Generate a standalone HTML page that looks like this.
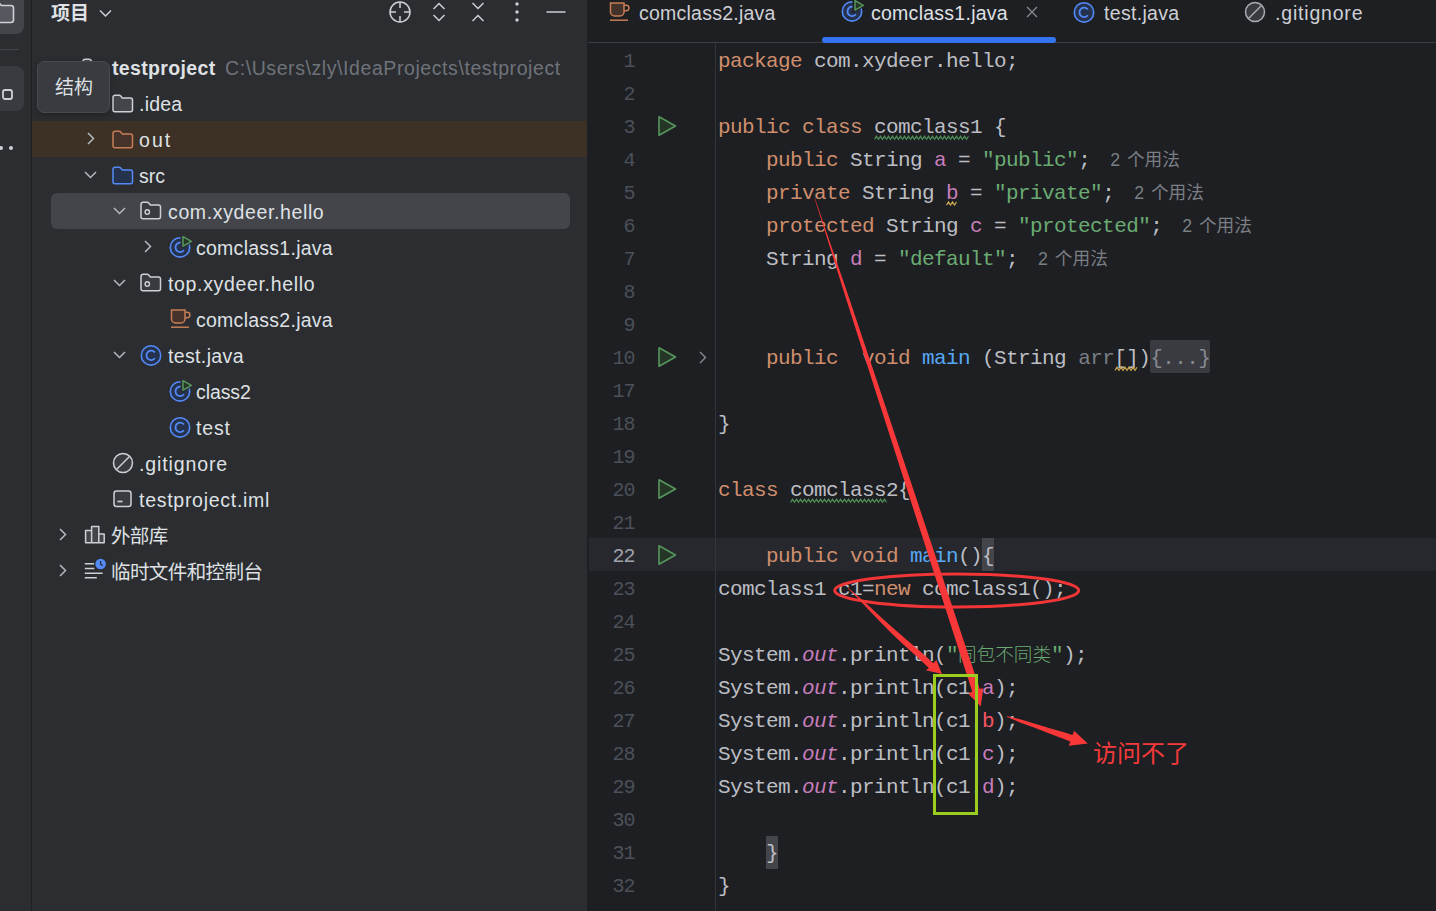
<!DOCTYPE html><html lang="zh"><head><meta charset="utf-8"><title>IDE</title><style>
*{box-sizing:border-box;margin:0;padding:0}
html,body{width:1436px;height:911px;overflow:hidden;background:#1e1f22}
body{position:relative;font-family:"Liberation Sans","Noto Sans CJK SC",sans-serif;color:#dfe1e5}
.abs{position:absolute}
#strip{left:0;top:0;width:31px;height:911px;background:#2b2d30}
#stripb{left:31px;top:0;width:1px;height:911px;background:#1e1f22}
#panel{left:32px;top:0;width:555px;height:911px;background:#2b2d30}
.row{position:absolute;left:0;height:36px;line-height:36px;font-size:19.500px;white-space:nowrap;color:#dfe1e5}
.t{position:absolute;top:0;white-space:nowrap}
.code{position:absolute;left:718px;height:33px;line-height:33px;font-family:"Liberation Mono","Noto Sans CJK SC",monospace;font-size:21px;letter-spacing:-0.600px;white-space:pre;color:#bcbec4}
.ln{position:absolute;left:586.500px;width:48px;text-align:right;height:33px;line-height:33px;font-family:"Liberation Mono","Noto Sans CJK SC",monospace;font-size:20px;letter-spacing:-1px;color:#4b5059}
.k{color:#cf8e6d}.s{color:#6aab73}.f{color:#c77dbb}.m{color:#56a8f5}.g{color:#7a7e85}.i{font-style:italic;color:#c77dbb}
.hint{font-family:"Liberation Sans","Noto Sans CJK SC",sans-serif;font-size:17.700px;color:#7a7e85;margin-left:20px;letter-spacing:0;word-spacing:2px;position:relative;top:0.700px}
.tab{position:absolute;top:0;height:26px;line-height:26px;font-size:19.500px;white-space:nowrap;color:#ced0d6}
svg{position:absolute;overflow:visible}
</style></head><body>
<div id="strip" class="abs"></div><div id="stripb" class="abs"></div><div id="panel" class="abs"></div>
<div class="abs" style="left:-8px;top:-12px;width:31.500px;height:46px;border-radius:8px;background:#43454a"></div>
<svg style="left:0;top:0" width="32" height="40"><path d="M-4 2.500h2.500l3 3h9.500a2.500 2.500 0 0 1 2.500 2.500v12a2.500 2.500 0 0 1-2.500 2.500h-15z" fill="#55585e" stroke="#ced0d6" stroke-width="1.600"/></svg>
<div class="abs" style="left:0;top:49px;width:19px;height:1px;background:#43454a"></div>
<div class="abs" style="left:-8px;top:65.500px;width:31.500px;height:45px;border-radius:8px;background:#393b40"></div>
<svg style="left:0;top:80px" width="20" height="30"><rect x="3" y="10" width="9" height="9" rx="2" fill="none" stroke="#ced0d6" stroke-width="1.8"/></svg>
<svg style="left:0;top:140px" width="20" height="16"><circle cx="1" cy="8" r="2" fill="#ced0d6"/><circle cx="11" cy="8" r="2" fill="#ced0d6"/></svg>
<div class="abs" style="left:51px;top:-1.500px;height:30px;line-height:30px;font-size:19px;font-weight:bold;color:#dfe1e5;white-space:nowrap">项目</div>
<svg style="left:98px;top:8px" width="16" height="12"><path d="M2 2.5l5.5 5.5l5.5-5.5" fill="none" stroke="#ced0d6" stroke-width="1.5"/></svg>
<svg style="left:386px;top:0" width="200" height="28" fill="none" stroke="#ced0d6" stroke-width="1.5"><circle cx="14" cy="12" r="10"/><path d="M14 2v6M14 16v6M4 12h6M18 12h6"/><path d="M47.5 9l5.5-5.5l5.5 5.5M47.5 15l5.5 5.5l5.5-5.5"/><path d="M86.5 3l5.5 5.5l5.5-5.5M86.5 21l5.5-5.5l5.5 5.5"/><g fill="#ced0d6" stroke="none"><circle cx="131" cy="4" r="1.7"/><circle cx="131" cy="12" r="1.7"/><circle cx="131" cy="20" r="1.7"/></g><path d="M160.5 12h19"/></svg>
<div class="abs" style="left:32px;top:121px;width:555px;height:36px;background:#3d3126"></div>
<div class="abs" style="left:51px;top:193px;width:518.500px;height:36px;border-radius:6px;background:#43454a"></div>
<svg style="left:82px;top:57.5px" width="22" height="19"><path d="M1 3.3a2 2 0 0 1 2-2h4.2a2 2 0 0 1 1.5.7l1.6 1.9h8.2a2 2 0 0 1 2 2v9.8a2 2 0 0 1-2 2h-15.5a2 2 0 0 1-2-2z" fill="#43454a" stroke="#ced0d6" stroke-width="1.5"/></svg>
<div id="f1" class="row" style="left:112px;top:49.5px;letter-spacing:0.350px;"><b>testproject</b></div>
<div id="f2" class="row" style="left:225px;top:49.5px;letter-spacing:0.581px;color:#6f737a">C:\Users\zly\IdeaProjects\testproject</div>
<svg style="left:112px;top:93.5px" width="22" height="19"><path d="M1 3.3a2 2 0 0 1 2-2h4.2a2 2 0 0 1 1.5.7l1.6 1.9h8.2a2 2 0 0 1 2 2v9.8a2 2 0 0 1-2 2h-15.5a2 2 0 0 1-2-2z" fill="#43454a" stroke="#ced0d6" stroke-width="1.5"/></svg>
<div id="f3" class="row" style="left:139px;top:85.5px;letter-spacing:0.226px;">.idea</div>
<svg style="left:86px;top:131.0px" width="12" height="16"><path d="M2 2l5.5 5.5l-5.5 5.5" fill="none" stroke="#b4b8bf" stroke-width="1.5"/></svg>
<svg style="left:112px;top:129.5px" width="22" height="19"><path d="M1 3.3a2 2 0 0 1 2-2h4.2a2 2 0 0 1 1.5.7l1.6 1.9h8.2a2 2 0 0 1 2 2v9.8a2 2 0 0 1-2 2h-15.5a2 2 0 0 1-2-2z" fill="#45322b" stroke="#c77d55" stroke-width="1.5"/></svg>
<div id="f4" class="row" style="left:139px;top:121.5px;letter-spacing:2.045px;">out</div>
<svg style="left:83px;top:169.5px" width="16" height="12"><path d="M2 2l5.5 5.5l5.5-5.5" fill="none" stroke="#b4b8bf" stroke-width="1.5"/></svg>
<svg style="left:112px;top:165.5px" width="22" height="19"><path d="M1 3.3a2 2 0 0 1 2-2h4.2a2 2 0 0 1 1.5.7l1.6 1.9h8.2a2 2 0 0 1 2 2v9.8a2 2 0 0 1-2 2h-15.5a2 2 0 0 1-2-2z" fill="#25324d" stroke="#548af7" stroke-width="1.5"/></svg>
<div id="f5" class="row" style="left:139px;top:157.5px;letter-spacing:-0.050px;">src</div>
<svg style="left:112px;top:205.5px" width="16" height="12"><path d="M2 2l5.5 5.5l5.5-5.5" fill="none" stroke="#b4b8bf" stroke-width="1.5"/></svg>
<svg style="left:140px;top:201.0px" width="22" height="19"><path d="M1 3.3a2 2 0 0 1 2-2h4.2a2 2 0 0 1 1.5.7l1.6 1.9h8.2a2 2 0 0 1 2 2v9.8a2 2 0 0 1-2 2h-15.5a2 2 0 0 1-2-2z" fill="#393b40" stroke="#ced0d6" stroke-width="1.5"/><circle cx="7.3" cy="11" r="2.2" fill="none" stroke="#ced0d6" stroke-width="1.4"/></svg>
<div id="f6" class="row" style="left:168px;top:193.5px;letter-spacing:0.625px;">com.xydeer.hello</div>
<svg style="left:143px;top:239.0px" width="12" height="16"><path d="M2 2l5.5 5.5l-5.5 5.5" fill="none" stroke="#b4b8bf" stroke-width="1.5"/></svg>
<svg style="left:168px;top:233.5px" width="24" height="26"><circle cx="12" cy="13.400" r="9.700" fill="#25324d" stroke="#548af7" stroke-width="1.600"/><path d="M15.900 10.500a4.700 4.700 0 1 0 0 5.800" fill="none" stroke="#548af7" stroke-width="1.800"/><path d="M12.600 -0.800v16l14-8z" fill="#2b2d30"/><path d="M15 2.600v9.600l8.300-4.800z" fill="#253627" stroke="#57965c" stroke-width="1.500" stroke-linejoin="round"/></svg>
<div id="f7" class="row" style="left:196px;top:229.5px;letter-spacing:0.261px;">comclass1.java</div>
<svg style="left:112px;top:277.5px" width="16" height="12"><path d="M2 2l5.5 5.5l5.5-5.5" fill="none" stroke="#b4b8bf" stroke-width="1.5"/></svg>
<svg style="left:140px;top:273.0px" width="22" height="19"><path d="M1 3.3a2 2 0 0 1 2-2h4.2a2 2 0 0 1 1.5.7l1.6 1.9h8.2a2 2 0 0 1 2 2v9.8a2 2 0 0 1-2 2h-15.5a2 2 0 0 1-2-2z" fill="#393b40" stroke="#ced0d6" stroke-width="1.5"/><circle cx="7.3" cy="11" r="2.2" fill="none" stroke="#ced0d6" stroke-width="1.4"/></svg>
<div id="f8" class="row" style="left:168px;top:265.5px;letter-spacing:0.659px;">top.xydeer.hello</div>
<svg style="left:170px;top:309.0px" width="22" height="20"><path d="M1.5 1h13.5v9a4 4 0 0 1-4 4h-5.500a4 4 0 0 1-4-4z" fill="#45322b" stroke="#c77d55" stroke-width="1.5"/><path d="M15 3.300h2.200a2.300 2.300 0 0 1 0 5.400h-2.200" fill="none" stroke="#c77d55" stroke-width="1.5"/><path d="M1 18.2h18" stroke="#c77d55" stroke-width="1.5"/></svg>
<div id="f9" class="row" style="left:196px;top:301.5px;letter-spacing:0.261px;">comclass2.java</div>
<svg style="left:112px;top:349.5px" width="16" height="12"><path d="M2 2l5.5 5.5l5.5-5.5" fill="none" stroke="#b4b8bf" stroke-width="1.5"/></svg>
<svg style="left:139px;top:341.5px" width="24" height="26"><circle cx="12" cy="13.400" r="9.700" fill="#25324d" stroke="#548af7" stroke-width="1.600"/><path d="M15.900 10.500a4.700 4.700 0 1 0 0 5.800" fill="none" stroke="#548af7" stroke-width="1.800"/></svg>
<div id="f10" class="row" style="left:168px;top:337.5px;letter-spacing:0.359px;">test.java</div>
<svg style="left:168px;top:377.5px" width="24" height="26"><circle cx="12" cy="13.400" r="9.700" fill="#25324d" stroke="#548af7" stroke-width="1.600"/><path d="M15.900 10.500a4.700 4.700 0 1 0 0 5.800" fill="none" stroke="#548af7" stroke-width="1.800"/><path d="M12.600 -0.800v16l14-8z" fill="#2b2d30"/><path d="M15 2.600v9.600l8.300-4.800z" fill="#253627" stroke="#57965c" stroke-width="1.500" stroke-linejoin="round"/></svg>
<div id="f11" class="row" style="left:196px;top:373.5px;letter-spacing:-0.076px;">class2</div>
<svg style="left:168px;top:413.5px" width="24" height="26"><circle cx="12" cy="13.400" r="9.700" fill="#25324d" stroke="#548af7" stroke-width="1.600"/><path d="M15.900 10.500a4.700 4.700 0 1 0 0 5.800" fill="none" stroke="#548af7" stroke-width="1.800"/></svg>
<div id="f12" class="row" style="left:196px;top:409.5px;letter-spacing:0.854px;">test</div>
<svg style="left:112px;top:451.5px" width="22" height="22"><circle cx="11" cy="11" r="9.500" fill="#393b40" stroke="#ced0d6" stroke-width="1.5"/><path d="M4.500 17.500l13-13" stroke="#ced0d6" stroke-width="1.5"/></svg>
<div id="f13" class="row" style="left:139px;top:445.5px;letter-spacing:0.887px;">.gitignore</div>
<svg style="left:113px;top:489.5px" width="20" height="18"><rect x="1" y="1" width="17" height="15.500" rx="2.500" fill="#393b40" stroke="#ced0d6" stroke-width="1.500"/><path d="M4.500 11.500h5" stroke="#ced0d6" stroke-width="1.700"/></svg>
<div id="f14" class="row" style="left:139px;top:481.5px;letter-spacing:0.722px;">testproject.iml</div>
<svg style="left:58px;top:527.0px" width="12" height="16"><path d="M2 2l5.5 5.5l-5.5 5.5" fill="none" stroke="#b4b8bf" stroke-width="1.5"/></svg>
<svg style="left:84px;top:525.0px" width="22" height="20" fill="#43454a" stroke="#ced0d6" stroke-width="1.500" stroke-linejoin="round"><path d="M1.600 5.400h6v12.400h-6zM7.600 1.600h7.200v16.200h-7.200zM14.800 9.100h5.400v8.700h-5.400z"/></svg>
<div id="f15" class="row" style="left:111px;top:517.5px;letter-spacing:-0.658px;">外部库</div>
<svg style="left:58px;top:563.0px" width="12" height="16"><path d="M2 2l5.5 5.5l-5.5 5.5" fill="none" stroke="#b4b8bf" stroke-width="1.5"/></svg>
<svg style="left:84px;top:559.0px" width="24" height="24"><path d="M0.800 4.800h9.500M0.800 9.500h9.500M0.800 14.200h17.800M0.800 18.700h12" stroke="#ced0d6" stroke-width="1.500"/><circle cx="16.600" cy="5" r="6.600" fill="#2b2d30"/><circle cx="16.600" cy="5" r="5.300" fill="#548af7"/><path d="M16.600 2v3.200l2 1.400" fill="none" stroke="#2b2d30" stroke-width="1.300"/></svg>
<div id="f16" class="row" style="left:111px;top:553.5px;letter-spacing:-0.588px;">临时文件和控制台</div>
<div class="abs" style="left:37px;top:61px;width:73px;height:52px;border-radius:7px;background:#393b40;border:1px solid #484a4f;box-shadow:0 2px 6px rgba(0,0,0,.25)"></div>
<div class="abs" style="left:55px;top:73px;height:30px;line-height:30px;font-size:19px;color:#dfe1e5;white-space:nowrap">结构</div>
<div class="abs" style="left:588px;top:42px;width:848px;height:1px;background:#3c3e43"></div>
<div class="abs" style="left:822px;top:37px;width:234px;height:6px;border-radius:3px;background:#3574f0"></div>
<svg style="left:609px;top:2.0px" width="22" height="20"><path d="M1.5 1h13.5v9a4 4 0 0 1-4 4h-5.500a4 4 0 0 1-4-4z" fill="#45322b" stroke="#c77d55" stroke-width="1.5"/><path d="M15 3.300h2.200a2.300 2.300 0 0 1 0 5.400h-2.200" fill="none" stroke="#c77d55" stroke-width="1.5"/><path d="M1 18.2h18" stroke="#c77d55" stroke-width="1.5"/></svg>
<div id="f17" class="tab" style="left:639px;letter-spacing:0.238px;">comclass2.java</div>
<svg style="left:839.5px;top:-2px" width="24" height="26"><circle cx="12" cy="13.400" r="9.700" fill="#25324d" stroke="#548af7" stroke-width="1.600"/><path d="M15.900 10.500a4.700 4.700 0 1 0 0 5.800" fill="none" stroke="#548af7" stroke-width="1.800"/><path d="M12.600 -0.800v16l14-8z" fill="#1e1f22"/><path d="M15 2.600v9.600l8.300-4.800z" fill="#253627" stroke="#57965c" stroke-width="1.500" stroke-linejoin="round"/></svg>
<div id="f18" class="tab" style="left:871px;letter-spacing:0.261px;color:#dfe1e5">comclass1.java</div>
<svg style="left:1026px;top:6px" width="12" height="12"><path d="M1 1l10 10M11 1l-10 10" stroke="#868a91" stroke-width="1.300"/></svg>
<svg style="left:1072px;top:-1.5px" width="24" height="26"><circle cx="12" cy="13.400" r="9.700" fill="#25324d" stroke="#548af7" stroke-width="1.600"/><path d="M15.900 10.500a4.700 4.700 0 1 0 0 5.800" fill="none" stroke="#548af7" stroke-width="1.800"/></svg>
<div id="f19" class="tab" style="left:1104px;letter-spacing:0.322px;">test.java</div>
<svg style="left:1244px;top:1px" width="22" height="22"><circle cx="11" cy="11" r="9.500" fill="#393b40" stroke="#a8adb5" stroke-width="1.5"/><path d="M4.500 17.500l13-13" stroke="#a8adb5" stroke-width="1.5"/></svg>
<div id="f20" class="tab" style="left:1275px;letter-spacing:0.809px;">.gitignore</div>
<div class="abs" style="left:589px;top:538px;width:847px;height:33px;background:#26282e"></div>
<div class="abs" style="left:715px;top:43px;width:1px;height:868px;background:#313438"></div>
<div class="abs" style="left:1150px;top:340px;width:60px;height:33px;border-radius:2px;background:#393b40"></div>
<div class="abs" style="left:982px;top:538px;width:12px;height:33px;background:#43454a"></div>
<div class="abs" style="left:766px;top:836px;width:12px;height:33px;background:#43454a"></div>
<div class="ln" style="top:44.5px">1</div>
<div class="code" style="top:44.5px"><span class="k">package</span> com.xydeer.hello;</div>
<div class="ln" style="top:77.5px">2</div>
<div class="ln" style="top:110.5px">3</div>
<div class="code" style="top:110.5px"><span class="k">public class</span> comclass1 {</div>
<svg style="left:657.400px;top:114.6px" width="22" height="22"><path d="M2 1.800v18.400l16.500-9.200z" fill="#253627" stroke="#57965c" stroke-width="1.600" stroke-linejoin="round"/></svg>
<div class="ln" style="top:143.5px">4</div>
<div class="code" style="top:143.5px">    <span class="k">public</span> String <span class="f">a</span> = <span class="s">&quot;public&quot;</span>;<span class="hint">2 个用法</span></div>
<div class="ln" style="top:176.5px">5</div>
<div class="code" style="top:176.5px">    <span class="k">private</span> String <span class="f">b</span> = <span class="s">&quot;private&quot;</span>;<span class="hint">2 个用法</span></div>
<div class="ln" style="top:209.5px">6</div>
<div class="code" style="top:209.5px">    <span class="k">protected</span> String <span class="f">c</span> = <span class="s">&quot;protected&quot;</span>;<span class="hint">2 个用法</span></div>
<div class="ln" style="top:242.5px">7</div>
<div class="code" style="top:242.5px">    String <span class="f">d</span> = <span class="s">&quot;default&quot;</span>;<span class="hint">2 个用法</span></div>
<div class="ln" style="top:275.5px">8</div>
<div class="ln" style="top:308.5px">9</div>
<div class="ln" style="top:341.5px">10</div>
<div class="code" style="top:341.5px">    <span class="k">public</span>  <span class="k">void</span> <span class="m">main</span> (String <span class="g">arr</span>[])<span style="color:#868a91">{...}</span></div>
<svg style="left:657.400px;top:345.6px" width="22" height="22"><path d="M2 1.800v18.400l16.500-9.200z" fill="#253627" stroke="#57965c" stroke-width="1.600" stroke-linejoin="round"/></svg>
<svg style="left:698px;top:350.5px" width="12" height="14"><path d="M2 1l5.500 5.500l-5.500 5.500" fill="none" stroke="#868a91" stroke-width="1.400"/></svg>
<div class="ln" style="top:374.5px">17</div>
<div class="ln" style="top:407.5px">18</div>
<div class="code" style="top:407.5px">}</div>
<div class="ln" style="top:440.5px">19</div>
<div class="ln" style="top:473.5px">20</div>
<div class="code" style="top:473.5px"><span class="k">class</span> comclass2{</div>
<svg style="left:657.400px;top:477.6px" width="22" height="22"><path d="M2 1.800v18.400l16.500-9.200z" fill="#253627" stroke="#57965c" stroke-width="1.600" stroke-linejoin="round"/></svg>
<div class="ln" style="top:506.5px">21</div>
<div class="ln" style="top:539.5px;color:#a1a3ab">22</div>
<div class="code" style="top:539.5px">    <span class="k">public void</span> <span class="m">main</span>(){</div>
<svg style="left:657.400px;top:543.6px" width="22" height="22"><path d="M2 1.800v18.400l16.500-9.200z" fill="#253627" stroke="#57965c" stroke-width="1.600" stroke-linejoin="round"/></svg>
<div class="ln" style="top:572.5px">23</div>
<div class="code" style="top:572.5px">comclass1 c1=<span class="k">new</span> comclass1();</div>
<div class="ln" style="top:605.5px">24</div>
<div class="ln" style="top:638.5px">25</div>
<div class="code" style="top:638.5px">System.<span class="i">out</span>.println(<span class="s">&quot;</span><span class="s" style="font-size:18.600px;letter-spacing:0;font-weight:300">同包不同类</span><span class="s">&quot;</span>);</div>
<div class="ln" style="top:671.5px">26</div>
<div class="code" style="top:671.5px">System.<span class="i">out</span>.println(c1.<span class="f">a</span>);</div>
<div class="ln" style="top:704.5px">27</div>
<div class="code" style="top:704.5px">System.<span class="i">out</span>.println(c1.<span style="color:#f75464">b</span>);</div>
<div class="ln" style="top:737.5px">28</div>
<div class="code" style="top:737.5px">System.<span class="i">out</span>.println(c1.<span class="f">c</span>);</div>
<div class="ln" style="top:770.5px">29</div>
<div class="code" style="top:770.5px">System.<span class="i">out</span>.println(c1.<span class="f">d</span>);</div>
<div class="ln" style="top:803.5px">30</div>
<div class="ln" style="top:836.5px">31</div>
<div class="code" style="top:836.5px">    }</div>
<div class="ln" style="top:869.5px">32</div>
<div class="code" style="top:869.5px">}</div>
<svg style="left:0;top:0" width="1436" height="911"><polyline points="874.5,139.4 876.5,136.2 878.5,139.4 880.5,136.2 882.5,139.4 884.5,136.2 886.5,139.4 888.5,136.2 890.5,139.4 892.5,136.2 894.5,139.4 896.5,136.2 898.5,139.4 900.5,136.2 902.5,139.4 904.5,136.2 906.5,139.4 908.5,136.2 910.5,139.4 912.5,136.2 914.5,139.4 916.5,136.2 918.5,139.4 920.5,136.2 922.5,139.4 924.5,136.2 926.5,139.4 928.5,136.2 930.5,139.4 932.5,136.2 934.5,139.4 936.5,136.2 938.5,139.4 940.5,136.2 942.5,139.4 944.5,136.2 946.5,139.4 948.5,136.2 950.5,139.4 952.5,136.2 954.5,139.4 956.5,136.2 958.5,139.4 960.5,136.2 962.5,139.4 964.5,136.2 966.5,139.4 968.5,136.2" fill="none" stroke="#4f8a55" stroke-width="1.200"/></svg>
<svg style="left:0;top:0" width="1436" height="911"><polyline points="946.5,205.1 948.5,201.9 950.5,205.1 952.5,201.9 954.5,205.1 956.5,201.9" fill="none" stroke="#c7a450" stroke-width="1.200"/></svg>
<svg style="left:0;top:0" width="1436" height="911"><polyline points="1115.0,370.4 1117.0,367.2 1119.0,370.4 1121.0,367.2 1123.0,370.4 1125.0,367.2 1127.0,370.4 1129.0,367.2 1131.0,370.4 1133.0,367.2 1135.0,370.4 1137.0,367.2" fill="none" stroke="#c7a450" stroke-width="1.200"/></svg>
<svg style="left:0;top:0" width="1436" height="911"><polyline points="790.5,502.4 792.5,499.2 794.5,502.4 796.5,499.2 798.5,502.4 800.5,499.2 802.5,502.4 804.5,499.2 806.5,502.4 808.5,499.2 810.5,502.4 812.5,499.2 814.5,502.4 816.5,499.2 818.5,502.4 820.5,499.2 822.5,502.4 824.5,499.2 826.5,502.4 828.5,499.2 830.5,502.4 832.5,499.2 834.5,502.4 836.5,499.2 838.5,502.4 840.5,499.2 842.5,502.4 844.5,499.2 846.5,502.4 848.5,499.2 850.5,502.4 852.5,499.2 854.5,502.4 856.5,499.2 858.5,502.4 860.5,499.2 862.5,502.4 864.5,499.2 866.5,502.4 868.5,499.2 870.5,502.4 872.5,499.2 874.5,502.4 876.5,499.2 878.5,502.4 880.5,499.2 882.5,502.4 884.5,499.2 886.5,502.4" fill="none" stroke="#4f8a55" stroke-width="1.200"/></svg>
<svg style="left:0;top:0" width="1436" height="911"><ellipse cx="956.700" cy="590.500" rx="122" ry="16.500" fill="none" stroke="#f23536" stroke-width="3"/><polygon points="815.0,198.2 831.7,247.2 848.5,296.2 881.5,394.4 914.4,492.6 955.3,615.4 979.8,689.1 983.3,688.2 980.7,706.5 968.4,693.7 972.2,691.5 948.4,617.6 908.7,494.4 877.0,395.8 845.6,297.2 830.1,247.8 814.6,198.4" fill="#f83738"/><polygon points="848.2,587.8 856.8,595.2 867.9,605.1 882.1,618.2 894.8,629.6 907.7,640.8 921.5,652.6 933.5,663.2 936.4,659.8 941.9,674.0 925.8,670.2 928.9,668.0 917.3,657.1 903.9,644.9 891.4,633.2 879.4,621.1 866.0,607.1 855.8,596.3 847.8,588.2" fill="#f83738"/><polygon points="1007.0,716.1 1013.6,717.7 1020.9,719.6 1036.6,724.3 1052.3,729.0 1064.8,732.6 1072.6,735.0 1074.0,730.8 1087.8,743.6 1068.7,745.8 1070.4,741.4 1062.7,738.6 1050.6,733.9 1035.3,728.1 1020.0,722.4 1013.1,719.4 1006.8,716.7" fill="#f83738"/><rect x="934.500" y="675.500" width="42" height="138" fill="none" stroke="#9acd1e" stroke-width="3"/><text x="1093" y="762" font-size="24" fill="#f53a3a" font-family='"Liberation Sans","Noto Sans CJK SC",sans-serif'>访问不了</text></svg>
</body></html>
